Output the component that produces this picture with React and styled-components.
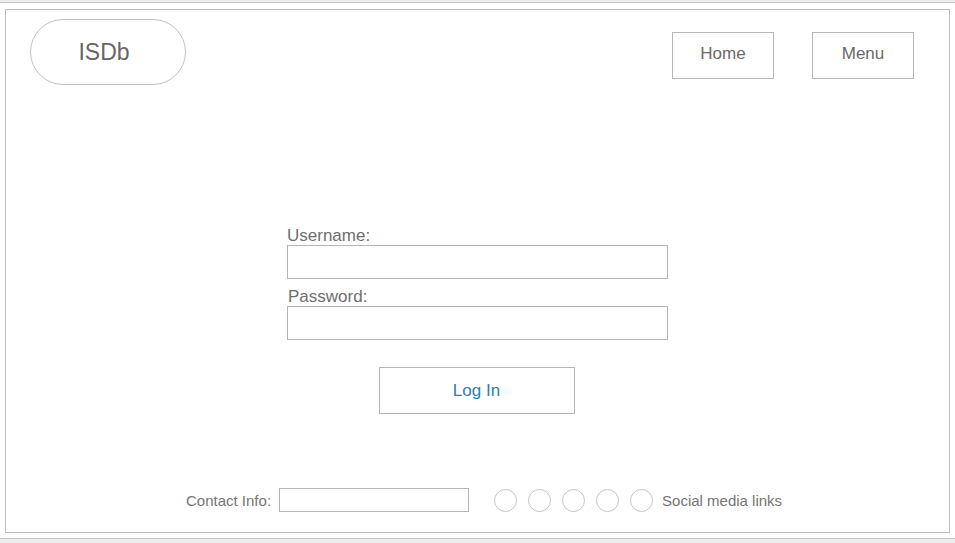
import React from 'react'
import styled, { createGlobalStyle } from 'styled-components'

const GlobalStyle = createGlobalStyle`
  html, body {
    margin: 0;
    padding: 0;
    background: #ffffff;
  }
  body {
    font-family: "Liberation Sans", Arial, Helvetica, sans-serif;
    color: #6f6f6f;
  }
  * {
    box-sizing: border-box;
  }
`

const Viewport = styled.div`
  height: 543px;
  display: flex;
  flex-direction: column;
  background: #fff;
  border-top: 2px solid #ececec;
  border-bottom: 4px solid #ececec;
`

const Canvas = styled.div`
  flex: 1;
  display: flex;
  flex-direction: column;
  border-top: 1px solid #c6c6c6;
  border-bottom: 1px solid #c6c6c6;
  padding: 6px 5px 5px 5px;
`

const Frame = styled.div`
  width: 945px;
  flex: 1;
  display: flex;
  flex-direction: column;
  border: 1px solid #bdbdbd;
`

const Header = styled.header`
  display: flex;
  justify-content: space-between;
  align-items: flex-start;
  padding: 9px 35px 0 24px;
`

const Logo = styled.div`
  width: 156px;
  height: 66px;
  border: 1px solid #c2c2c2;
  border-radius: 33px;
  display: flex;
  align-items: center;
  justify-content: center;
  padding-right: 8px;
  font-size: 23px;
  color: #666;
`

const Nav = styled.nav`
  display: flex;
  gap: 38px;
  margin-top: 13px;
`

const NavButton = styled.div`
  width: 102px;
  height: 47px;
  border: 1px solid #b8b8b8;
  display: flex;
  align-items: center;
  justify-content: center;
  padding-bottom: 3px;
  font-size: 17px;
  color: #6a6a6a;
`

const Main = styled.main`
  flex: 1;
  display: flex;
  flex-direction: column;
  align-items: center;
  padding-top: 141px;
`

const Form = styled.div`
  width: 381px;
  display: flex;
  flex-direction: column;
`

const Field = styled.div`
  display: flex;
  flex-direction: column;
  margin-top: ${p => (p.first ? '0' : '8px')};
`

const Label = styled.label`
  font-size: 17px;
  line-height: 19px;
  color: #6e6e6e;
  padding-left: ${p => p.indent || 0}px;
`

const TextBox = styled.div`
  height: 34px;
  border: 1px solid #b5b5b5;
  background: #fff;
`

const LoginButton = styled.div`
  margin-top: 27px;
  margin-right: 2px;
  width: 196px;
  height: 47px;
  border: 1px solid #b5b5b5;
  display: flex;
  align-items: center;
  justify-content: center;
  font-size: 17px;
  color: #2f7bb4;
`

const Footer = styled.footer`
  display: flex;
  align-items: center;
  padding: 0 0 20px 180px;
  height: 44px;
`

const FooterText = styled.span`
  font-size: 15px;
  color: #757575;
`

const ContactBox = styled.div`
  width: 190px;
  height: 24px;
  border: 1px solid #b5b5b5;
  margin: 0 25px 0 8px;
`

const Circles = styled.div`
  display: flex;
  gap: 11px;
  margin-right: 9px;
`

const Circle = styled.div`
  width: 23px;
  height: 23px;
  border-radius: 50%;
  border: 1px solid #c4c4c4;
`

export default function App() {
  return (
    <>
      <GlobalStyle />
      <Viewport>
        <Canvas>
          <Frame>
            <Header>
              <Logo>ISDb</Logo>
              <Nav>
                <NavButton>Home</NavButton>
                <NavButton>Menu</NavButton>
              </Nav>
            </Header>
            <Main>
              <Form>
                <Field first>
                  <Label>Username:</Label>
                  <TextBox />
                </Field>
                <Field>
                  <Label indent={1}>Password:</Label>
                  <TextBox />
                </Field>
              </Form>
              <LoginButton>Log In</LoginButton>
            </Main>
            <Footer>
              <FooterText>Contact Info:</FooterText>
              <ContactBox />
              <Circles>
                {[0, 1, 2, 3, 4].map(i => (
                  <Circle key={i} />
                ))}
              </Circles>
              <FooterText>Social media links</FooterText>
            </Footer>
          </Frame>
        </Canvas>
      </Viewport>
    </>
  )
}
